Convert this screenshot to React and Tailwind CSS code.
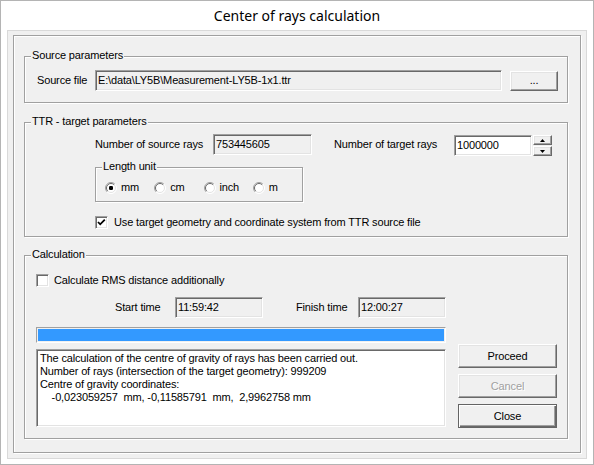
import React from "react";

const sunken =
  "border border-t-[#a0a0a0] border-l-[#a0a0a0] border-b-white border-r-white shadow-[inset_1px_1px_0_#696969,inset_-1px_-1px_0_#e3e3e3]";
const raised =
  "border border-t-white border-l-white border-b-[#696969] border-r-[#696969] shadow-[inset_-1px_-1px_0_#a0a0a0,inset_1px_1px_0_#e3e3e3] bg-[#f0f0f0]";
const defaultBtn =
  "border border-[#646464] shadow-[inset_1px_1px_0_#fff,inset_-1px_-1px_0_#696969,inset_-2px_-2px_0_#a0a0a0] bg-[#f0f0f0]";

function Group({ label, className, children }) {
  return (
    <div
      className={`relative border border-[#a0a0a0] shadow-[inset_1px_1px_0_#fff,1px_1px_0_#fff] ${className}`}
    >
      <span className="absolute left-[6px] top-[-8px] bg-[#f0f0f0] px-px leading-[13px]">
        {label}
      </span>
      {children}
    </div>
  );
}

function Edit({ value, white, className }) {
  return (
    <div
      className={`${sunken} ${white ? "bg-white" : "bg-[#f0f0f0]"} h-[21px] flex items-center pl-[2px] leading-[13px] ${className}`}
    >
      {value}
    </div>
  );
}

function Check({ checked }) {
  return (
    <div className={`${sunken} bg-white w-[13px] h-[13px] flex items-center justify-center`}>
      {checked && (
        <svg width="9" height="9" viewBox="0 0 9 9">
          <path d="M1 4 L3.2 6.3 L7.8 1.6" stroke="#000" strokeWidth="1.8" fill="none" />
        </svg>
      )}
    </div>
  );
}

function Radio({ checked }) {
  return (
    <svg width="12" height="12" viewBox="0 0 12 12">
      <circle cx="6" cy="6" r="5.5" fill="#fff" />
      <path d="M2.1 9.9 A5.5 5.5 0 0 1 9.9 2.1" stroke="#a0a0a0" fill="none" />
      <path d="M9.9 2.1 A5.5 5.5 0 0 1 2.1 9.9" stroke="#fff" fill="none" />
      <path d="M2.8 9.2 A4.5 4.5 0 0 1 9.2 2.8" stroke="#696969" fill="none" />
      <path d="M9.2 2.8 A4.5 4.5 0 0 1 2.8 9.2" stroke="#e3e3e3" fill="none" />
      {checked && <rect x="4" y="4" width="4" height="4" rx="1.2" fill="#000" />}
    </svg>
  );
}

export default function App() {
  const units = [
    { label: "mm", checked: true },
    { label: "cm" },
    { label: "inch" },
    { label: "m" },
  ];

  return (
    <div className="w-[594px] h-[465px] border border-[#b4b4b4] bg-white flex flex-col font-['Liberation_Sans',Arial,sans-serif] text-[11px] tracking-[-0.15px] text-black">
      {/* Title bar */}
      <div className="h-[29px] flex items-center justify-center font-['Noto_Sans',sans-serif] text-[14px] tracking-normal text-black">
        Center of rays calculation
      </div>

      {/* Client area */}
      <div className="mx-[6px] mb-[5px] flex-1 flex border border-[#d9d9d9] bg-[#f0f0f0] pl-[5px] pt-[4px] pr-[5px] pb-[5px]">
        <div className="flex-1 flex flex-col border border-[#a0a0a0] shadow-[inset_1px_1px_0_#fff,1px_1px_0_#fff] pl-[10px] pr-[12px]">
          {/* Source parameters */}
          <Group label="Source parameters" className="mt-[20px] h-[47px]">
            <div className="flex items-center mt-[13px] pl-[12px]">
              <span className="w-[58px]">Source file</span>
              <Edit value="E:\data\LY5B\Measurement-LY5B-1x1.ttr" className="w-[407px]" />
              <button className={`${raised} ml-[8px] w-[48px] h-[20px] flex items-center justify-center leading-[13px]`}>
                ...
              </button>
            </div>
          </Group>

          {/* TTR - target parameters */}
          <Group label="TTR - target parameters" className="mt-[19px] h-[115px]">
            <div className="flex items-center mt-[10px] pl-[70px]">
              <span className="w-[118px]">Number of source rays</span>
              <Edit value="753445605" className="w-[99px]" />
              <span className="ml-[22px] w-[120px]">Number of target rays</span>
              <Edit value="1000000" white className="w-[78px] mt-[2px]" />
              <div className="ml-px mt-[2px] w-[19px] h-[21px] flex flex-col">
                <div className={`${raised} h-[10px] flex items-center justify-center`}>
                  <svg width="5" height="3" viewBox="0 0 5 3">
                    <path d="M2.5 0 L5 3 L0 3 Z" fill="#000" />
                  </svg>
                </div>
                <div className={`${raised} h-[10px] mt-px flex items-center justify-center`}>
                  <svg width="5" height="3" viewBox="0 0 5 3">
                    <path d="M0 0 L5 0 L2.5 3 Z" fill="#000" />
                  </svg>
                </div>
              </div>
            </div>

            <Group label="Length unit" className="mt-[11px] ml-[70px] w-[208px] h-[35px]">
              <div className="flex mt-[13px] pl-[9px]">
                {units.map((u) => (
                  <div key={u.label} className="w-[50px] flex items-center gap-[4px] leading-[13px]">
                    <Radio checked={u.checked} />
                    <span>{u.label}</span>
                  </div>
                ))}
              </div>
            </Group>

            <div className="flex items-center mt-[14px] ml-[70px] gap-[6px] leading-[13px]">
              <Check checked />
              <span>Use target geometry and coordinate system from TTR source file</span>
            </div>
          </Group>

          {/* Calculation */}
          <Group label="Calculation" className="mt-[18px] h-[184px]">
            <div className="flex items-center mt-[18px] ml-[11px] gap-[5px] leading-[13px]">
              <Check />
              <span>Calculate RMS distance additionally</span>
            </div>

            <div className="flex items-center mt-[10px] ml-[90px]">
              <span className="w-[60px]">Start time</span>
              <Edit value="11:59:42" className="w-[88px]" />
              <span className="ml-[33px] w-[62px]">Finish time</span>
              <Edit value="12:00:27" className="w-[88px]" />
            </div>

            <div className="flex mt-[9px] ml-[11px]">
              <div className="w-[410px] flex flex-col">
                <div className="h-[16px] border border-t-[#a0a0a0] border-l-[#a0a0a0] border-b-white border-r-white p-px">
                  <div className="h-full bg-[#3399ff]" />
                </div>
                <div className={`${sunken} mt-[6px] h-[78px] bg-white pl-[3px] pt-[2px] leading-[13px] whitespace-pre`}>
                  <div>The calculation of the centre of gravity of rays has been carried out.</div>
                  <div>Number of rays (intersection of the target geometry): 999209</div>
                  <div>Centre of gravity coordinates:</div>
                  <div>{"    -0,023059257  mm, -0,11585791  mm,  2,9962758 mm"}</div>
                </div>
              </div>

              <div className="ml-[12px] pt-[17px] w-[99px] flex flex-col gap-[6px]">
                <button className={`${raised} h-[24px] flex items-center justify-center leading-[13px]`}>
                  Proceed
                </button>
                <button className={`${raised} h-[24px] flex items-center justify-center leading-[13px] text-[#a0a0a0] [text-shadow:1px_1px_0_#fff]`}>
                  Cancel
                </button>
                <button className={`${defaultBtn} h-[24px] flex items-center justify-center leading-[13px]`}>
                  Close
                </button>
              </div>
            </div>
          </Group>
        </div>
      </div>
    </div>
  );
}
